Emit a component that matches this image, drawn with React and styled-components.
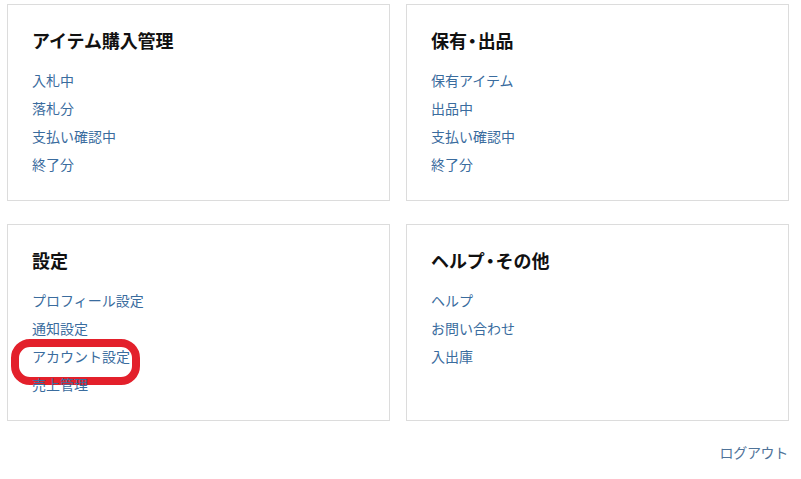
import React from "react";
import styled, { createGlobalStyle } from "styled-components";

const GlobalStyle = createGlobalStyle`
  body {
    margin: 0;
    background: #fff;
    font-family: "Noto Sans CJK JP", "Noto Sans", sans-serif;
  }
`;

const Page = styled.div`
  padding: 4px 12px 0 7px;
`;

const Grid = styled.div`
  display: grid;
  grid-template-columns: 383px 383px;
  column-gap: 16px;
  row-gap: 23px;
`;

const Card = styled.section`
  box-sizing: border-box;
  height: 197px;
  border: 1px solid #dcdcdc;
  padding: 22px 24px 20px 24px;
`;

const Title = styled.h2`
  margin: 0 0 11px;
  font-size: 18px;
  line-height: 27px;
  font-weight: 700;
  color: #111;
  letter-spacing: -0.1px;
`;

// 見出しの中黒だけ詰める
const Dot = styled.span`
  font-feature-settings: "palt";
  margin: 0 1px;
`;

const LinkList = styled.ul`
  list-style: none;
  margin: 0;
  padding: 0;
`;

const Item = styled.li`
  line-height: 28px;
  height: 28px;
`;

const Link = styled.a`
  position: relative;
  font-size: 14px;
  color: #3a6c9e;
  text-decoration: none;
  cursor: pointer;
`;

const Mark = styled.span`
  position: absolute;
  left: -21px;
  top: -7px;
  width: 129px;
  height: 46px;
  box-sizing: border-box;
  border: 8.5px solid #e3202b;
  border-radius: 19px;
  pointer-events: none;
`;

const Footer = styled.div`
  display: flex;
  justify-content: flex-end;
  padding-top: 19px;
`;

const Logout = styled.a`
  font-size: 14px;
  line-height: 24px;
  color: #4f7399;
  text-decoration: none;
  margin-right: 1px;
  letter-spacing: -0.3px;
`;

const sections = [
  { title: "アイテム購入管理", links: ["入札中", "落札分", "支払い確認中", "終了分"] },
  { title: "保有・出品", links: ["保有アイテム", "出品中", "支払い確認中", "終了分"] },
  { title: "設定", links: ["プロフィール設定", "通知設定", "アカウント設定", "売上管理"], marked: "アカウント設定" },
  { title: "ヘルプ・その他", links: ["ヘルプ", "お問い合わせ", "入出庫"] },
];

function renderTitle(title) {
  const parts = title.split("・");
  return parts.map((p, i) => (
    <React.Fragment key={i}>
      {i > 0 && <Dot>・</Dot>}
      {p}
    </React.Fragment>
  ));
}

function MenuCard({ title, links, marked }) {
  return (
    <Card>
      <Title>{renderTitle(title)}</Title>
      <LinkList>
        {links.map((l) => (
          <Item key={l}>
            <Link>
              {l}
              {marked === l && <Mark />}
            </Link>
          </Item>
        ))}
      </LinkList>
    </Card>
  );
}

export default function App() {
  return (
    <Page>
      <GlobalStyle />
      <Grid>
        {sections.map((s) => (
          <MenuCard key={s.title} {...s} />
        ))}
      </Grid>
      <Footer>
        <Logout>ログアウト</Logout>
      </Footer>
    </Page>
  );
}
